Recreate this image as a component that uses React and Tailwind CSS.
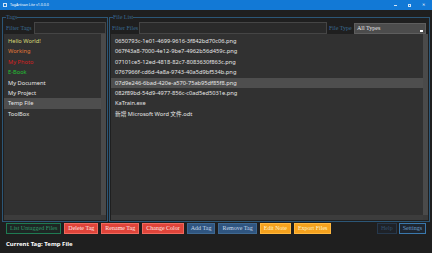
import React from 'react';

const tags = [
  { name: 'Hello World!', color: 'text-[#d8d878]' },
  { name: 'Working', color: 'text-[#e07838]' },
  { name: 'My Photo', color: 'text-[#d42020]' },
  { name: 'E-Book', color: 'text-[#22c032]' },
  { name: 'My Document', color: 'text-[#e6e6e6]' },
  { name: 'My Project', color: 'text-[#e6e6e6]' },
  { name: 'Temp File', color: 'text-[#e6e6e6]', selected: true },
  { name: 'ToolBox', color: 'text-[#e6e6e6]' },
];

const files = [
  { name: '0650793c-1e01-4699-9616-3f842bd70c06.png' },
  { name: '067f43a8-7000-4e12-9be7-4962b56d459c.png' },
  { name: '07101ce5-12ed-4818-82c7-8083630f863c.png' },
  { name: '0767966f-cd6d-4a8a-9743-40a5d9bf534b.png' },
  { name: '07d9e246-6bad-420e-a570-75ab95df85f8.png', selected: true },
  { name: '082f89bd-54d9-4977-856c-c0ad5ed5031e.png' },
  { name: 'KaTrain.exe' },
  { name: '新增 Microsoft Word 文件.odt' },
];

const buttons = [
  { label: 'List Untagged Files', cls: 'bg-[#1e2624] border-[#1f7a52] text-[#2f9a68]' },
  { label: 'Delete Tag', cls: 'bg-[#e0443a] border-[#f06a5e] text-[#ffe6e2]' },
  { label: 'Rename Tag', cls: 'bg-[#e0443a] border-[#f06a5e] text-[#ffe6e2]' },
  { label: 'Change Color', cls: 'bg-[#e0443a] border-[#f06a5e] text-[#ffe6e2]' },
  { label: 'Add Tag', cls: 'bg-[#2f5580] border-[#3f6890] text-[#c6d6e8]' },
  { label: 'Remove Tag', cls: 'bg-[#2f5580] border-[#3f6890] text-[#c6d6e8]' },
  { label: 'Edit Note', cls: 'bg-[#f5a21e] border-[#ffb840] text-[#fff2cc]' },
  { label: 'Export Files', cls: 'bg-[#f5a21e] border-[#ffb840] text-[#fff2cc]' },
];

const serif = "font-['Liberation_Serif',serif]";
const sans = "font-['Noto_Sans','Noto_Sans_CJK_SC',sans-serif]";

const ListBox = ({ items, pad }) => (
  <div className="flex-1 flex min-h-0 bg-[#313131]">
    <div className="flex-1 flex flex-col min-w-0">
      <div className="flex-1 pt-[2px] overflow-hidden">
        {items.map((it) => (
          <div
            key={it.name}
            className={`h-[10.4px] leading-[10.4px] whitespace-nowrap text-[5.7px] ${pad} ${sans} ${
              it.selected ? 'bg-[#4e4e4e]' : ''
            } ${it.color || 'text-[#e6e6e6]'}`}
          >
            {it.name}
          </div>
        ))}
      </div>
      <div className="h-[5px] bg-[#3c3c3c]" />
    </div>
    <div className="w-[5px] flex flex-col bg-[#4a4a4a]">
      <div className="flex-1" />
      <div className="h-[5px] bg-[#3a3a3a]" />
    </div>
  </div>
);

export default function App() {
  return (
    <div className="w-[432px] h-[253px] bg-[#1f1f1f] flex flex-col overflow-hidden">
      {/* title bar */}
      <div className="h-[10px] bg-[#1279d6] flex items-center pl-[3px] text-white">
        <div className="w-[4px] h-[4px] border border-white/80 mr-[3px]" />
        <span className={`text-[3.6px] ${sans}`}>TagArtisan Lite v1.0.0.0</span>
        <div className="ml-auto flex items-center gap-[11px] pr-[7px] text-[4px]">
          <div className="w-[3px] h-[0.6px] bg-white/80" />
          <div className="w-[3px] h-[3px] border-[0.6px] border-white/80" />
          <span className={`${sans} leading-none`}>✕</span>
        </div>
      </div>

      <div className="h-[212px] flex gap-[1px] px-[2px] pt-[4px]">
        {/* Tags group */}
        <fieldset className="w-[106px] flex flex-col border border-[#2c5676] px-[1px] pb-[1px] min-h-0">
          <legend className={`ml-[2px] text-[6px] leading-[6px] text-[#3a6a92] ${serif}`}>Tags</legend>
          <div className="h-[12px] flex items-center mt-[2px]">
            <span className={`w-[30px] pl-[2px] text-[6px] text-[#3a6a92] ${serif}`}>Filter Tags</span>
            <div className="flex-1 h-[12px] bg-[#2a2a2a] border border-[#454545]" />
          </div>
          <ListBox items={tags} pad="pl-[4px]" />
        </fieldset>

        {/* File list group */}
        <fieldset className="flex-1 flex flex-col border border-[#2c5676] px-[1px] pb-[1px] min-h-0">
          <legend className={`ml-[2px] text-[6px] leading-[6px] text-[#3a6a92] ${serif}`}>File List</legend>
          <div className="h-[12px] flex items-center mt-[2px]">
            <span className={`w-[28px] pl-[1px] text-[6px] text-[#3a6a92] ${serif}`}>Filter Files</span>
            <div className="flex-1 h-[12px] bg-[#2a2a2a] border border-[#454545]" />
            <span className={`w-[27px] pl-[2px] text-[6px] text-[#3a6a92] ${serif}`}>File Type</span>
            <div className="w-[72px] h-[11px] mr-[2px] bg-[#4c4c4c] border border-[#5e5e5e] relative flex items-center pl-[2px]">
              <span className={`text-[6px] text-[#e8e8e8] ${serif}`}>All Types</span>
              <div className="absolute right-[2px] bottom-[1px] w-[3px] h-[2px] bg-white" />
            </div>
          </div>
          <ListBox items={files} pad="pl-[4px]" />
        </fieldset>
      </div>

      {/* buttons */}
      <div className="h-[11px] mt-[1px] flex items-stretch gap-[3px] px-[6px]">
        {buttons.map((b) => (
          <div
            key={b.label}
            className={`border px-[3px] flex items-center text-[6px] whitespace-nowrap ${serif} ${b.cls}`}
          >
            {b.label}
          </div>
        ))}
        <div className="ml-auto flex gap-[2px]">
          <div className={`border border-[#26384c] bg-[#1e2228] px-[3px] flex items-center text-[6px] text-[#34506c] ${serif}`}>Help</div>
          <div className={`border border-[#3a78ac] bg-[#1e2630] px-[3px] flex items-center text-[6px] text-[#6a9ccc] ${serif}`}>Settings</div>
        </div>
      </div>

      <div className={`pl-[6px] pt-[6px] text-[6px] font-bold text-white ${sans}`}>Current Tag: Temp File</div>
    </div>
  );
}
